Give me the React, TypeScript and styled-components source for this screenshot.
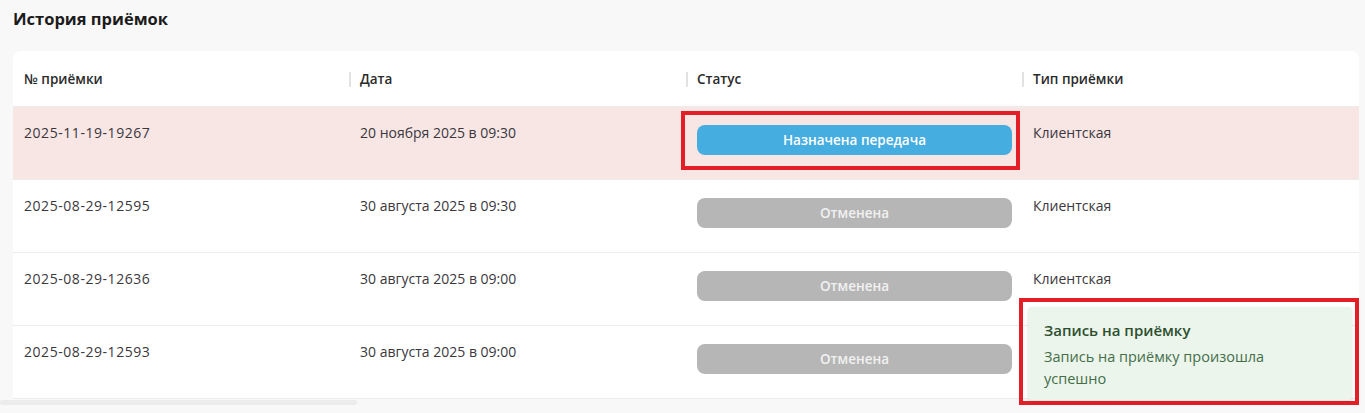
import React from "react";
import styled, { createGlobalStyle } from "styled-components";

const GlobalStyle = createGlobalStyle`
  html, body { margin: 0; padding: 0; }
  body {
    background: #f8f8f8;
    font-family: "Open Sans", "Noto Sans", Arial, sans-serif;
    color: #333;
    overflow: hidden;
  }
  * { box-sizing: border-box; }
`;

const Page = styled.div`
  position: relative;
  width: 1365px;
  height: 413px;
  padding: 8px 6px 0 13px;
`;

const Title = styled.h2`
  margin: 0;
  font-size: 16.5px;
  line-height: 22px;
  font-weight: 700;
  color: #1b1b1b;
`;

const Card = styled.div`
  margin-top: 21px;
  background: #fff;
  border-radius: 8px 8px 0 0;
`;

const Grid = styled.div`
  display: grid;
  grid-template-columns: 336px 337px 336px 337px;
`;

const HeadCell = styled.div<{ $divider?: boolean }>`
  position: relative;
  height: 56px;
  display: flex;
  align-items: center;
  padding-left: 11px;
  font-size: 13.5px;
  font-weight: 600;
  color: #2a2a2a;
  border-bottom: 1px solid #ececec;
  &::before {
    content: "";
    display: ${(p) => (p.$divider ? "block" : "none")};
    position: absolute;
    left: 0;
    top: 21px;
    width: 2px;
    height: 15px;
    background: #e2e2e2;
  }
`;

const Cell = styled.div<{ $hl?: boolean; $mono?: boolean }>`
  position: relative;
  height: 73px;
  padding: 18px 10px 0 11px;
  font-size: 14px;
  line-height: 16px;
  letter-spacing: ${(p) => (p.$mono ? "0.55px" : "0")};
  color: #3a373d;
  background: ${(p) => (p.$hl ? "#f8e6e5" : "#fff")};
  border-bottom: 1px solid #ececec;
`;

const Badge = styled.div<{ $kind: "blue" | "gray" }>`
  height: 30px;
  border-radius: 8px;
  display: flex;
  align-items: center;
  justify-content: center;
  font-size: 13.5px;
  font-weight: 600;
  color: ${(p) => (p.$kind === "blue" ? "#ffffff" : "#f1f1f1")};
  background: ${(p) => (p.$kind === "blue" ? "#45addf" : "#b6b6b6")};
`;

const Highlight = styled.div`
  position: absolute;
  left: -5px;
  top: 4px;
  width: 339px;
  height: 59px;
  border: 4px solid #e41e26;
  pointer-events: none;
`;

const Scrollbar = styled.div`
  position: absolute;
  left: 0;
  top: 400px;
  width: 357px;
  height: 5px;
  border-radius: 3px;
  background: #ececec;
`;

const ToastFrame = styled.div`
  position: absolute;
  right: 6px;
  bottom: 8px;
  width: 340px;
  height: 107px;
  border: 4px solid #e41e26;
  padding: 5px 3px 1px 5px;
`;

const Toast = styled.div`
  height: 100%;
  background: #ebf5ec;
  border-radius: 4px;
  box-shadow: 0 1px 3px rgba(0, 0, 0, 0.12);
  padding: 13px 16px 0 16px;
`;

const ToastTitle = styled.div`
  font-size: 15px;
  line-height: 20px;
  font-weight: 650;
  color: #2d4f2f;
`;

const ToastText = styled.div`
  margin-top: 6px;
  max-width: 240px;
  font-size: 14.5px;
  line-height: 22px;
  color: #456e48;
`;

type Row = { id: string; date: string; status: string; kind: "blue" | "gray"; type: string; hl?: boolean };

const rows: Row[] = [
  { id: "2025-11-19-19267", date: "20 ноября 2025 в 09:30", status: "Назначена передача", kind: "blue", type: "Клиентская", hl: true },
  { id: "2025-08-29-12595", date: "30 августа 2025 в 09:30", status: "Отменена", kind: "gray", type: "Клиентская" },
  { id: "2025-08-29-12636", date: "30 августа 2025 в 09:00", status: "Отменена", kind: "gray", type: "Клиентская" },
  { id: "2025-08-29-12593", date: "30 августа 2025 в 09:00", status: "Отменена", kind: "gray", type: "" },
];

export default function App() {
  return (
    <>
      <GlobalStyle />
      <Page>
        <Title>История приёмок</Title>
        <Card>
          <Grid>
            <HeadCell>№ приёмки</HeadCell>
            <HeadCell $divider>Дата</HeadCell>
            <HeadCell $divider>Статус</HeadCell>
            <HeadCell $divider>Тип приёмки</HeadCell>
            {rows.map((r) => (
              <React.Fragment key={r.id}>
                <Cell $hl={r.hl} $mono>{r.id}</Cell>
                <Cell $hl={r.hl}>{r.date}</Cell>
                <Cell $hl={r.hl}>
                  <Badge $kind={r.kind}>{r.status}</Badge>
                  {r.hl && <Highlight />}
                </Cell>
                <Cell $hl={r.hl}>{r.type}</Cell>
              </React.Fragment>
            ))}
          </Grid>
        </Card>
        <Scrollbar />
        <ToastFrame>
          <Toast>
            <ToastTitle>Запись на приёмку</ToastTitle>
            <ToastText>Запись на приёмку произошла успешно</ToastText>
          </Toast>
        </ToastFrame>
      </Page>
    </>
  );
}
